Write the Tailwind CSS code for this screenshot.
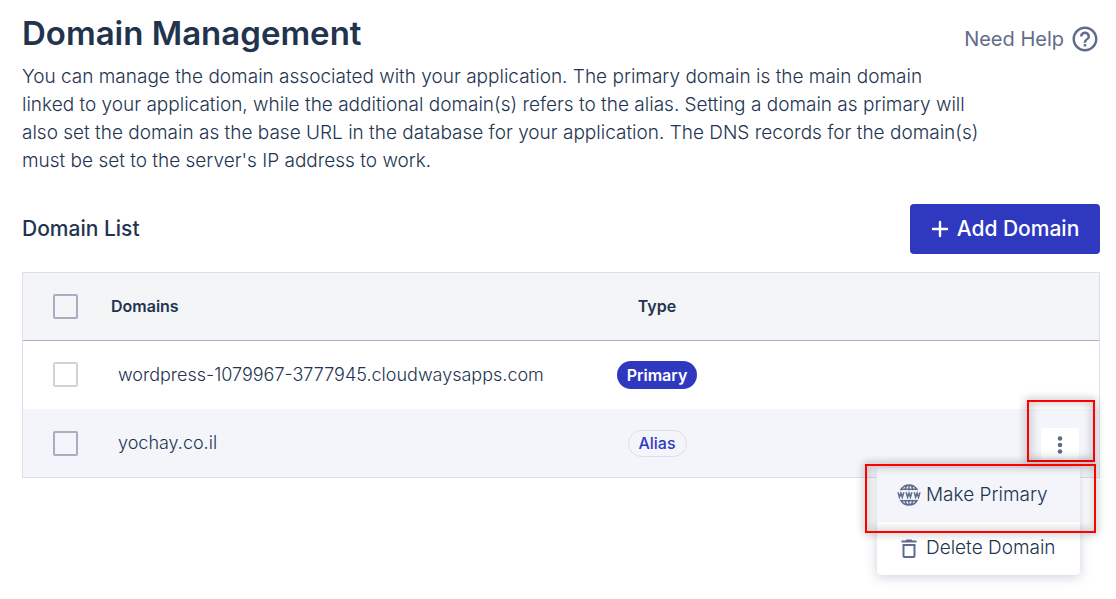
<!DOCTYPE html>
<html lang="en">
<head>
<meta charset="utf-8">
<meta name="viewport" content="width=device-width, initial-scale=1">
<title>Domain Management</title>
<script src="https://cdn.jsdelivr.net/npm/@tailwindcss/browser@4"></script>
</head>
<body class="min-h-screen bg-white pt-3 pr-4 pl-[22px] font-[Inter,sans-serif] text-[#233450]">
<main>
  <header class="flex items-start justify-between gap-6">
    <h1 class="text-[33px] leading-[43px] font-semibold text-[#22334d]">Domain Management</h1>
    <a href="#" class="flex items-center gap-1.5 pt-3 text-xl leading-[30px] text-[#5f6c8b]">
      Need Help
      <svg class="size-[30px]" viewBox="0 0 24 24" fill="currentColor" aria-hidden="true"><path d="M11 18h2v-2h-2v2zm1-16C6.48 2 2 6.48 2 12s4.480 10 10 10 10-4.480 10-10S17.520 2 12 2zm0 18c-4.410 0-8-3.590-8-8s3.590-8 8-8 8 3.590 8 8-3.590 8-8 8zm0-14c-2.210 0-4 1.790-4 4h2c0-1.100.9-2 2-2s2 .9 2 2c0 2-3 1.750-3 5h2c0-2.250 3-2.500 3-5 0-2.210-1.790-4-4-4z"/></svg>
    </a>
  </header>
  <p class="mt-2 text-[19px] leading-7 font-light">You can manage the domain associated with your application. The primary domain is the main domain<br>linked to your application, while the additional domain(s) refers to the alias. Setting a domain as primary will<br>also set the domain as the base URL in the database for your application. The DNS records for the domain(s)<br>must be set to the server's IP address to work.</p>

  <div class="mt-[29px] flex items-center justify-between">
    <h2 class="text-[21px] font-medium">Domain List</h2>
    <button type="button" class="flex h-[50px] w-[190px] items-center justify-center gap-2 rounded bg-[#2f39bf] text-[21px] font-medium text-white">
      <svg class="size-[18px]" viewBox="0 0 18 18" fill="none" stroke="currentColor" stroke-width="2.400" stroke-linecap="round" aria-hidden="true"><path d="M9 2v14M2 9h14"/></svg>
      Add Domain
    </button>
  </div>

  <div class="relative mt-[18px] border border-[#dcdfe6]">
    <table class="w-full table-fixed border-collapse text-left">
      <colgroup><col class="w-[88px]"><col><col class="w-[160px]"><col class="w-[362px]"></colgroup>
      <thead>
        <tr class="h-[67px] border-b border-[#a5afc0] bg-[#f3f5f7]">
          <th class="pl-[30px]"><input type="checkbox" aria-label="Select all domains" class="block size-[25px] appearance-none rounded-xs border-2 border-[#a5afc0]"></th>
          <th class="text-base font-semibold">Domains</th>
          <th class="text-center text-base font-semibold">Type</th>
          <th aria-label="Actions"></th>
        </tr>
      </thead>
      <tbody>
        <tr class="h-[69px]">
          <td class="pl-[30px]"><input id="d1" type="checkbox" disabled class="block size-[25px] appearance-none rounded-xs border-2 border-[#d2d3da]"></td>
          <td class="pl-[7px] text-lg font-light"><label for="d1">wordpress-1079967-3777945.cloudwaysapps.com</label></td>
          <td class="text-center"><span class="inline-flex h-7 w-20 items-center justify-center rounded-full bg-[#2f39bf] text-base font-semibold text-white">Primary</span></td>
          <td></td>
        </tr>
        <tr class="h-[68px] bg-[#f4f5fb]">
          <td class="pl-[30px]"><input id="d2" type="checkbox" class="block size-[25px] appearance-none rounded-xs border-2 border-[#a5afc0]"></td>
          <td class="pl-[7px] text-lg font-light"><label for="d2">yochay.co.il</label></td>
          <td class="text-center"><span class="inline-flex h-[27px] w-[59px] items-center justify-center rounded-full border border-[#dcdfe6] text-base font-medium text-[#2f39bf]">Alias</span></td>
          <td class="pt-1 pr-5">
            <button type="button" aria-label="Domain actions" aria-expanded="true" class="ml-auto flex h-[34px] w-[38px] items-center justify-center rounded bg-white text-[#5f6c8b]">
              <svg class="h-[18px] w-[6px]" viewBox="0 0 6 18" fill="currentColor" aria-hidden="true"><circle cx="3" cy="2.500" r="2.300"/><circle cx="3" cy="9" r="2.300"/><circle cx="3" cy="15.500" r="2.300"/></svg>
            </button>
          </td>
        </tr>
      </tbody>
    </table>

    <div class="absolute top-[195px] right-[19px] flex w-[203px] flex-col rounded bg-white text-[19px] font-light shadow-[0_2px_12px_rgba(60,70,120,0.25)]">
      <button type="button" class="flex h-[54px] items-center gap-[5px] bg-[#f4f5fb] pl-5">
        <svg class="size-6 text-[#5f6c8b]" viewBox="0 0 24 24" fill="none" stroke="currentColor" stroke-width="1.500" aria-hidden="true"><path d="M3.500 7.200C5.200 4 8.300 2 12 2s6.800 2 8.500 5.200M3.500 16.800C5.200 20 8.300 22 12 22s6.800-2 8.500-5.200M12 2v5.200M12 16.800V22M8 7.200C8.500 4.500 9.800 2 12 2s3.500 2.500 4 5.200M8 16.800c.5 2.700 1.800 5.200 4 5.200s3.500-2.500 4-5.200M4.500 6.300h15M4.500 17.700h15"/><path stroke-width="1.500" d="M1 9.200l1.500 5 1.400-4.200 1.400 4.200 1.500-5M9.100 9.200l1.500 5L12 10l1.400 4.200 1.500-5M17.200 9.200l1.500 5 1.400-4.200 1.400 4.200 1.500-5"/></svg>
        Make Primary
      </button>
      <button type="button" class="flex h-[53px] items-center gap-[5px] pl-5">
        <svg class="size-6 text-[#5f6c8b]" viewBox="0 0 24 24" fill="currentColor" aria-hidden="true"><path fill-rule="evenodd" d="M5.500 19a2 2 0 0 0 2 2h9a2 2 0 0 0 2-2V7h-13zM7.500 9h9v10h-9zM15.500 3.500l-1-1h-5l-1 1h-4v2h15v-2z"/></svg>
        Delete Domain
      </button>
    </div>

    <div class="pointer-events-none absolute top-[127px] right-1 h-[62px] w-[68px] border-2 border-[#fe0000] drop-shadow-[0_0_4px_rgba(0,0,0,0.6)]"></div>
    <div class="pointer-events-none absolute top-[191px] right-[3px] h-[69px] w-[231px] border-2 border-[#fe0000] drop-shadow-[0_0_4px_rgba(0,0,0,0.6)]"></div>
  </div>
</main>
</body>
</html>
